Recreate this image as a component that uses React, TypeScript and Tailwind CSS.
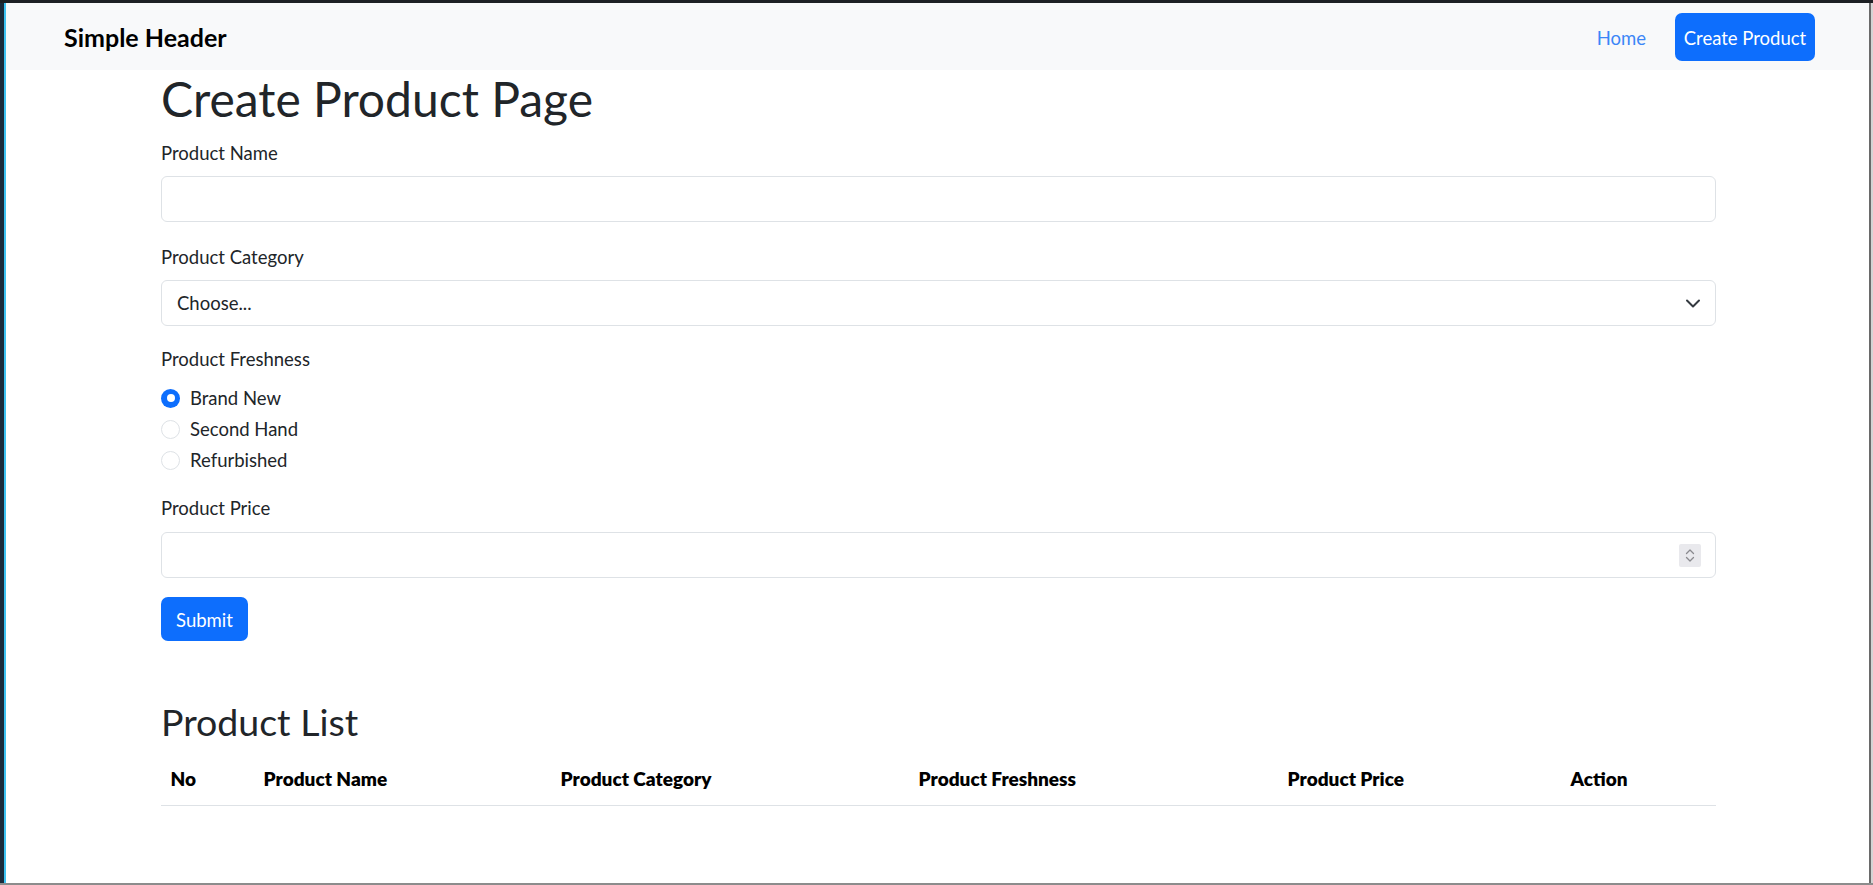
import React from "react";

function Label({ children, pt = 2, mb = 8 }: { children: React.ReactNode; pt?: number; mb?: number }) {
  return (
    <div
      className={
        "text-[18.5px] leading-[28.8px] text-[#212529] " +
        (pt === 2 ? "pt-[2px] " : "pt-0 ") +
        (mb === 8 ? "mb-[8px]" : mb === 9 ? "mb-[9px]" : "mb-[10px]")
      }
    >
      {children}
    </div>
  );
}

function Radio({ checked, label }: { checked?: boolean; label: string }) {
  return (
    <div className="flex items-center h-[28.8px] mb-[2.4px]">
      {checked ? (
        <span className="w-[19px] h-[19px] rounded-full bg-[#0d6efd] flex items-center justify-center shrink-0">
          <span className="w-[8px] h-[8px] rounded-full bg-white" />
        </span>
      ) : (
        <span className="w-[19px] h-[19px] rounded-full border border-[#dee2e6] bg-white shrink-0" />
      )}
      <span className="ml-[10px] text-[18.5px] leading-[28.8px] text-[#212529]">{label}</span>
    </div>
  );
}

export default function App() {
  return (
    <div className="w-[1873px] h-[885px] flex flex-col bg-[#1c1f23] overflow-hidden font-['Lato','Noto_Sans',sans-serif]">
      <div className="h-[3px] shrink-0 bg-[#1d2024]" />
      <div className="flex flex-1 min-h-0">
        <div className="w-[4px] shrink-0 bg-[#1a2b3b]" />
        <div className="w-[2px] shrink-0 bg-[#3ec3f2]" />
        <div className="flex-1 min-w-0 flex flex-col bg-white">
          {/* Navbar */}
          <nav className="h-[67px] shrink-0 bg-[#f8f9fa] flex items-center justify-between pl-[58px] pr-[54px]">
            <div className="pt-[2px] text-[25px] font-bold text-black leading-none">Simple Header</div>
            <div className="flex items-center">
              <a className="pt-[3px] text-[18.5px] text-[#3b86f7] leading-none">Home</a>
              <button className="ml-[29px] w-[140px] h-[48px] pt-[3px] rounded-[7px] bg-[#0d6efd] text-white text-[18.5px] leading-none">
                Create Product
              </button>
            </div>
          </nav>

          {/* Content */}
          <div className="ml-[155px] w-[1555px] flex flex-col">
            <h1 className="text-[48px] leading-[57.6px] text-[#212529] font-normal mb-[9.6px]">Create Product Page</h1>

            <Label>Product Name</Label>
            <div className="h-[46px] rounded-[6px] border border-[#dee2e6] bg-white mb-[19.2px]" />

            <Label>Product Category</Label>
            <div className="h-[46px] rounded-[6px] border border-[#dee2e6] bg-white mb-[19.2px] flex items-center justify-between pl-[15px] pr-[14px]">
              <span className="text-[18.5px] text-[#212529] pt-[2px]">Choose...</span>
              <svg width="16" height="16" viewBox="0 0 16 16" fill="none">
                <path d="M2 5.5l6 6 6-6" stroke="#343a40" strokeWidth="2" strokeLinecap="round" strokeLinejoin="round" />
              </svg>
            </div>

            <Label pt={0} mb={10}>Product Freshness</Label>
            <div className="flex flex-col mb-[14px]">
              <Radio checked label="Brand New" />
              <Radio label="Second Hand" />
              <Radio label="Refurbished" />
            </div>

            <Label mb={10}>Product Price</Label>
            <div className="h-[46px] rounded-[6px] border border-[#dee2e6] bg-white mb-[19px] flex items-center justify-end pr-[14px]">
              <div className="w-[22px] h-[23px] bg-[#e9e9ed] rounded-[2px] flex items-center justify-center">
                <svg width="22" height="23" viewBox="0 0 22 23" fill="none">
                  <path d="M7.5 9.5L11 6l3.5 3.5" stroke="#8a8a8f" strokeWidth="1.3" strokeLinecap="round" strokeLinejoin="round" />
                  <path d="M7.5 13.5L11 17l3.5-3.5" stroke="#8a8a8f" strokeWidth="1.3" strokeLinecap="round" strokeLinejoin="round" />
                </svg>
              </div>
            </div>

            <div>
              <button className="w-[87px] h-[44px] pt-[2px] rounded-[7px] bg-[#0d6efd] text-white text-[18.5px] leading-none">
                Submit
              </button>
            </div>

            <h2 className="mt-[58px] text-[37.5px] leading-[46px] text-[#212529] font-normal mb-[9.6px]">Product List</h2>

            <table className="w-[1555px] table-fixed border-collapse">
              <thead>
                <tr className="border-b border-[#dee2e6]">
                  <th className="w-[93px] text-left px-[9.6px] pt-[9.6px] pb-[12px] text-[19px] leading-[28.8px] font-extrabold text-black">No</th>
                  <th className="w-[297px] text-left px-[9.6px] pt-[9.6px] pb-[12px] text-[19px] leading-[28.8px] font-extrabold text-black">Product Name</th>
                  <th className="w-[358px] text-left px-[9.6px] pt-[9.6px] pb-[12px] text-[19px] leading-[28.8px] font-extrabold text-black">Product Category</th>
                  <th className="w-[369px] text-left px-[9.6px] pt-[9.6px] pb-[12px] text-[19px] leading-[28.8px] font-extrabold text-black">Product Freshness</th>
                  <th className="w-[283px] text-left px-[9.6px] pt-[9.6px] pb-[12px] text-[19px] leading-[28.8px] font-extrabold text-black">Product Price</th>
                  <th className="w-[155px] text-left px-[9.6px] pt-[9.6px] pb-[12px] text-[19px] leading-[28.8px] font-extrabold text-black">Action</th>
                </tr>
              </thead>
              <tbody />
            </table>
          </div>
        </div>
        <div className="w-[2px] shrink-0 bg-[#6a6a6a]" />
        <div className="w-[2px] shrink-0 bg-[#d4d4d4]" />
      </div>
      <div className="h-[2px] shrink-0 bg-[#8c8c8c]" />
    </div>
  );
}
